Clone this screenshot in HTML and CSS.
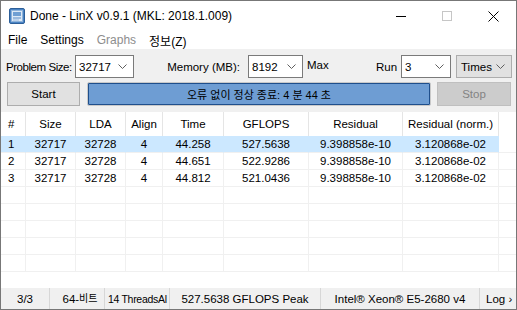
FILE: index.html
```html
<html>
    <head>
        <meta charset="utf-8">
        <link rel="stylesheet" href="styles.css">
        <title>Done - LinX v0.9.1 (MKL: 2018.1.009)</title>
    </head>
    <body>
        <div class="window">
            <!-- title bar -->
            <div class="titlebar">
                <svg class="appicon" width="16" height="16" viewBox="0 0 16 16">
                    <rect x="0.5" y="0.5" width="15" height="15" rx="1.5" fill="#4a84c4" stroke="#2d5f99"/>
                    <rect x="2.5" y="2.5" width="11" height="11" fill="#dce9f6" stroke="#8fb3da"/>
                    <rect x="4" y="4" width="8" height="4" fill="#6f9fd3"/>
                    <line x1="4" y1="10" x2="12" y2="10" stroke="#5a8cc6"/>
                    <line x1="4" y1="12" x2="10" y2="12" stroke="#9bbbe0"/>
                </svg>
                <span class="title">Done - LinX v0.9.1 (MKL: 2018.1.009)</span>
                <div class="caption">
                    <div class="capbtn">
                        <svg width="10" height="10"><line x1="0" y1="5.5" x2="10" y2="5.5" stroke="#000"/></svg>
                    </div>
                    <div class="capbtn">
                        <svg width="10" height="10"><rect x="0.5" y="0.5" width="9" height="9" fill="none" stroke="#c6c6c6"/></svg>
                    </div>
                    <div class="capbtn">
                        <svg width="11" height="11"><path d="M0.5 0.5 L10.5 10.5 M10.5 0.5 L0.5 10.5" stroke="#000" stroke-width="1"/></svg>
                    </div>
                </div>
            </div>

            <!-- menu -->
            <div class="menubar">
                <span class="menuitem">File</span>
                <span class="menuitem">Settings</span>
                <span class="menuitem disabled">Graphs</span>
                <span class="menuitem">정보(Z)</span>
            </div>

            <!-- controls -->
            <div class="controls">
                <div class="row">
                    <span class="label lbl-size">Problem Size:</span>
                    <div class="combo w-size"><span>32717</span>
                        <svg width="9" height="5"><polyline points="0.5,0.5 4.5,4.5 8.5,0.5" fill="none" stroke="#5f5f5f"/></svg></div>
                    <span class="label lbl-mem">Memory (MB):</span>
                    <div class="combo w-mem"><span>8192</span>
                        <svg width="9" height="5"><polyline points="0.5,0.5 4.5,4.5 8.5,0.5" fill="none" stroke="#5f5f5f"/></svg></div>
                    <span class="label lbl-max">Max</span>
                    <span class="label lbl-run">Run</span>
                    <div class="combo w-run"><span>3</span>
                        <svg width="9" height="5"><polyline points="0.5,0.5 4.5,4.5 8.5,0.5" fill="none" stroke="#5f5f5f"/></svg></div>
                    <div class="combo flat w-times"><span>Times</span>
                        <svg width="9" height="5"><polyline points="0.5,0.5 4.5,4.5 8.5,0.5" fill="none" stroke="#5f5f5f"/></svg></div>
                </div>
                <div class="row row2">
                    <div class="button start">Start</div>
                    <div class="progress">오류 없이 정상 종료: 4 분 44 초</div>
                    <div class="button stop">Stop</div>
                </div>
            </div>

            <!-- results list -->
            <div class="list">
                <div class="lrow head">
                    <div class="c left">#</div>
                    <div class="c">Size</div>
                    <div class="c">LDA</div>
                    <div class="c">Align</div>
                    <div class="c">Time</div>
                    <div class="c">GFLOPS</div>
                    <div class="c">Residual</div>
                    <div class="c">Residual (norm.)</div>
                    <div class="c fill"></div>
                </div>
                <div class="lrow sel">
                    <div class="c left">1</div><div class="c">32717</div><div class="c">32728</div><div class="c">4</div>
                    <div class="c">44.258</div><div class="c">527.5638</div><div class="c">9.398858e-10</div><div class="c">3.120868e-02</div>
                    <div class="c fill"></div>
                </div>
                <div class="lrow">
                    <div class="c left">2</div><div class="c">32717</div><div class="c">32728</div><div class="c">4</div>
                    <div class="c">44.651</div><div class="c">522.9286</div><div class="c">9.398858e-10</div><div class="c">3.120868e-02</div>
                    <div class="c fill"></div>
                </div>
                <div class="lrow">
                    <div class="c left">3</div><div class="c">32717</div><div class="c">32728</div><div class="c">4</div>
                    <div class="c">44.812</div><div class="c">521.0436</div><div class="c">9.398858e-10</div><div class="c">3.120868e-02</div>
                    <div class="c fill"></div>
                </div>
                <div class="lrow"><div class="c"></div><div class="c"></div><div class="c"></div><div class="c"></div><div class="c"></div><div class="c"></div><div class="c"></div><div class="c"></div><div class="c fill"></div></div>
                <div class="lrow"><div class="c"></div><div class="c"></div><div class="c"></div><div class="c"></div><div class="c"></div><div class="c"></div><div class="c"></div><div class="c"></div><div class="c fill"></div></div>
                <div class="lrow"><div class="c"></div><div class="c"></div><div class="c"></div><div class="c"></div><div class="c"></div><div class="c"></div><div class="c"></div><div class="c"></div><div class="c fill"></div></div>
                <div class="lrow"><div class="c"></div><div class="c"></div><div class="c"></div><div class="c"></div><div class="c"></div><div class="c"></div><div class="c"></div><div class="c"></div><div class="c fill"></div></div>
                <div class="lrow"><div class="c"></div><div class="c"></div><div class="c"></div><div class="c"></div><div class="c"></div><div class="c"></div><div class="c"></div><div class="c"></div><div class="c fill"></div></div>
            </div>

            <!-- status bar -->
            <div class="statusbar">
                <div class="sec s1">3/3</div>
                <div class="sec s2">64-<span class="kr">비트</span></div>
                <div class="sec s3">14 ThreadsAl</div>
                <div class="sec s4">527.5638 GFLOPS Peak</div>
                <div class="sec s5">Intel® Xeon® E5-2680 v4</div>
                <div class="sec s6">Log ›</div>
            </div>
        </div>
    </body>
</html>
```

FILE: styles.css
```css
body        {margin: 0;
             font-family: "Liberation Sans", "Noto Sans CJK KR", sans-serif;
             font-size: 11.5px;
             color: #000;}
.window     {width: 517px; height: 310px;
             box-sizing: border-box;
             border: 1px solid #777;
             background-color: #f0f0f0;
             display: flex; flex-direction: column;
             overflow: hidden;}

/* title bar */
.titlebar   {height: 30px; background-color: #fff;
             display: flex; align-items: center;}
.appicon    {margin-left: 8px;}
.title      {margin-left: 5px; font-size: 12px; flex: 1;}
.caption    {display: flex; height: 30px;}
.capbtn     {width: 46px; height: 30px;
             display: flex; align-items: center; justify-content: center;}

/* menu */
.menubar    {height: 18px; background-color: #fff;
             display: flex; align-items: center;
             padding-left: 7px; gap: 13px;
             font-size: 12px;}
.menuitem.disabled {color: #8d8d8d;}

/* controls */
.controls   {padding: 6px 0 6px 0;}
.row        {display: flex; align-items: center; height: 23px;}
.row2       {margin-top: 4px; height: 24px; padding-left: 6px;}
.label      {box-sizing: border-box; white-space: nowrap;}
.lbl-size   {width: 74px; padding-left: 5px; letter-spacing: -0.45px;}
.lbl-mem    {width: 114px; text-align: right; padding-right: 8px;}
.lbl-max    {width: 73px; padding-left: 4px; margin-top: -4px;}
.lbl-run    {width: 25px;}
.combo      {height: 23px; box-sizing: border-box;
             border: 1px solid #7a7a7a; background-color: #fff;
             display: flex; align-items: center; justify-content: space-between;
             padding: 0 6px 0 3px;}
.combo.flat {background-color: #e1e1e1; border-color: #adadad; padding-left: 4px;}
.w-size     {width: 59px;}
.w-mem      {width: 55px;}
.w-run      {width: 50px;}
.w-times    {width: 56px; margin-left: 5px;}

.button     {height: 24px; box-sizing: border-box;
             display: flex; align-items: center; justify-content: center;
             border: 1px solid #adadad; background-color: #e1e1e1;}
.start      {width: 73px;}
.stop       {width: 74px; margin-left: 6px;
             background-color: #cccccc; border-color: #bfbfbf; color: #838383;}
.progress   {width: 344px; height: 24px; box-sizing: border-box; margin-left: 7px;
             border: 1px solid #c9c9c9;
             box-shadow: inset 0 0 0 1px #1f4f8c;
             border-radius: 2px;
             background-color: #6e9dd3;
             display: flex; align-items: center; justify-content: center;
             font-size: 11px;}

/* list */
.list       {height: 176px; background-color: #fff; overflow: hidden;}
.lrow       {display: grid;
             grid-template-columns: 25px 50px 50px 37px 61px 85px 94px 96px 1fr;
             height: 17px;}
.lrow.head  {height: 24px;}
.c          {box-sizing: border-box;
             border-right: 1px solid #f0f0f0;
             border-bottom: 1px solid #f0f0f0;
             display: flex; align-items: center; justify-content: center;
             white-space: nowrap; overflow: hidden;}
.c.left     {justify-content: flex-start; padding-left: 7px;}
.c.fill     {border-right: none;}
.head .c    {border-bottom: none; border-right-color: #e5e5e5;}
.head .c.fill {border-right: none;}
.sel .c     {background-color: #cce8ff; border-right-color: #cce8ff;}
.sel .c.fill {background-color: #fff;}

/* status bar */
.statusbar  {height: 21px; display: flex; align-items: center;}
.sec        {height: 21px; box-sizing: border-box;
             display: flex; align-items: center; justify-content: center;
             border-right: 1px solid #d7d7d7;
             white-space: nowrap;}
.s1         {width: 49px;}
.s2         {width: 55px; padding-left: 6px;}
.s3         {width: 65px; justify-content: flex-start; padding-left: 3px;
             font-size: 10.5px; letter-spacing: -0.3px;}
.s4         {width: 151px;}
.s5         {width: 159px;}
.s6         {flex: 1; border-right: none; justify-content: flex-start; padding-left: 6px;}
.kr         {font-size: 10px; position: relative; top: -1px;}
```
